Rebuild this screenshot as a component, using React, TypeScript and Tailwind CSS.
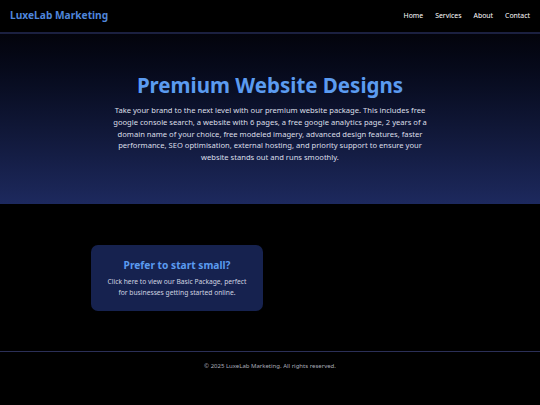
export default function App() {
  const nav = ['Home', 'Services', 'About', 'Contact'];

  return (
    <div className="min-h-[405px] bg-black font-['Noto_Sans',sans-serif] text-white">
      <header className="flex h-[34px] items-center justify-between border-b-2 border-[#1b2040] px-[10px]">
        <span className="text-[10.2px] font-bold text-[#4f86db]">LuxeLab Marketing</span>
        <nav className="flex gap-[12px] text-[6.9px] text-white">
          {nav.map((item) => (
            <a key={item} href="#">
              {item}
            </a>
          ))}
        </nav>
      </header>

      <section className="flex h-[170px] flex-col items-center bg-gradient-to-b from-[#03040c] to-[#1d295e] pt-[37px]">
        <h1 className="text-[20.5px] leading-[28px] font-bold text-[#5b9bf0]">Premium Website Designs</h1>
        <p className="mt-[6px] w-[318px] text-center text-[7.6px] leading-[11.8px] text-[#dcdfe8]">
          Take your brand to the next level with our premium website package. This includes free google
          console search, a website with 6 pages, a free google analytics page, 2 years of a domain name of
          your choice, free modeled imagery, advanced design features, faster performance, SEO optimisation,
          external hosting, and priority support to ensure your website stands out and runs smoothly.
        </p>
      </section>

      <main className="h-[147px] pt-[41px] pl-[91px]">
        <div className="flex h-[66px] w-[172px] flex-col items-center rounded-[7px] bg-[#16224f] pt-[13px]">
          <h2 className="text-[10.2px] leading-[15px] font-bold text-[#5b9bf0]">Prefer to start small?</h2>
          <p className="mt-[3px] w-[146px] text-center text-[6.7px] leading-[11px] text-[#d0d4e0]">
            Click here to view our Basic Package, perfect for businesses getting started online.
          </p>
        </div>
      </main>

      <footer className="border-t border-[#2b2f57] pt-[10px] text-center text-[6px] text-[#a9acb8]">
        © 2025 LuxeLab Marketing. All rights reserved.
      </footer>
    </div>
  );
}
